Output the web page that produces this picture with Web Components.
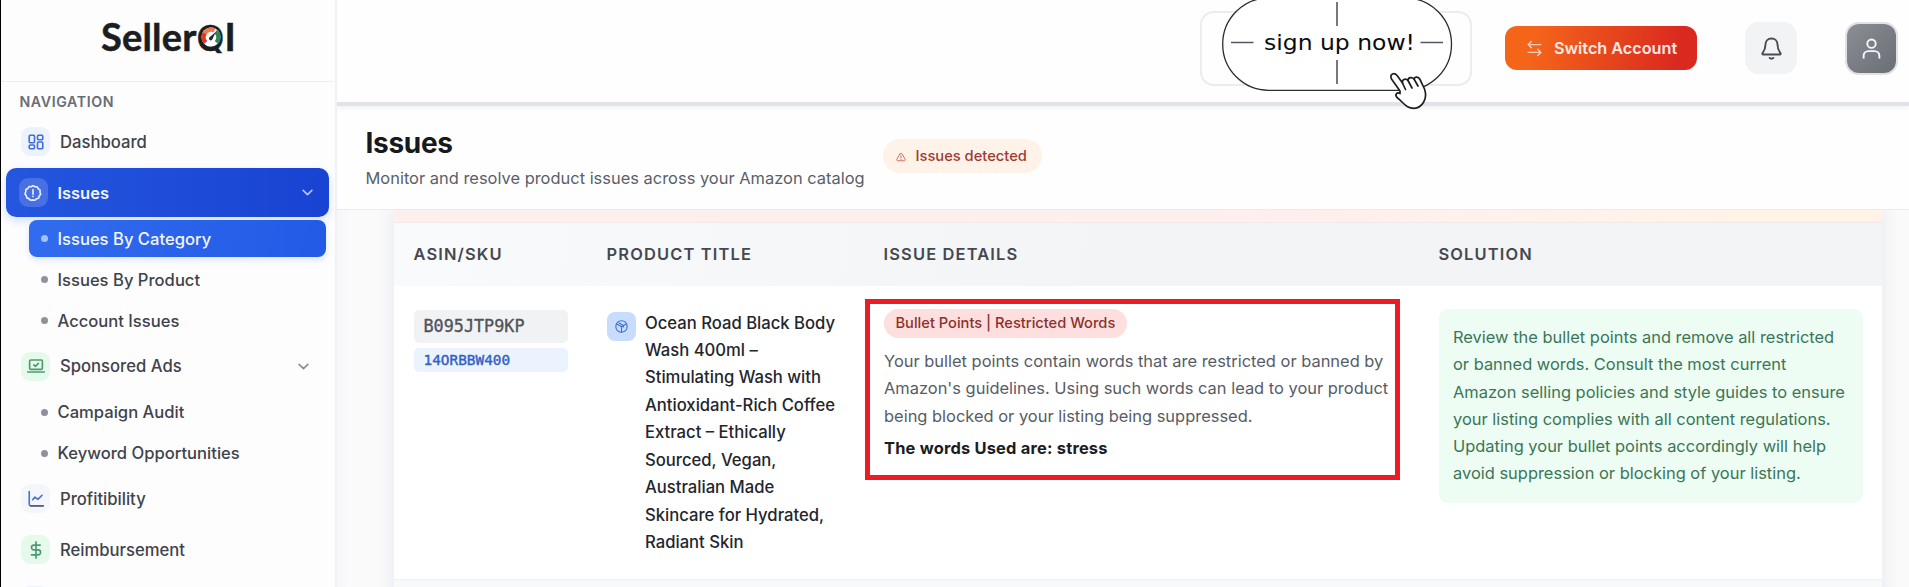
<!DOCTYPE html>
<html lang="en">
<head>
<meta charset="utf-8">
<title>SellerQI - Issues</title>
<style>
	html, body {
		margin: 0;
		height: 100%;
		overflow: hidden;
	}

	body {
		font-family: Inter, "Liberation Sans", sans-serif;
		font-size: 16.450px;
		color: #3f434b;
		background: #fdfdfd;
	}
</style>
</head>
<body>
<seller-app>
	<app-sidebar slot="sidebar">
		<nav-item icon="dashboard" tone="blue">Dashboard</nav-item>
		<nav-item icon="alert" active expandable>Issues</nav-item>
		<nav-group>
			<nav-sub active>Issues By Category</nav-sub>
			<nav-sub>Issues By Product</nav-sub>
			<nav-sub>Account Issues</nav-sub>
		</nav-group>
		<nav-item icon="laptop" tone="green" expandable>Sponsored Ads</nav-item>
		<nav-group>
			<nav-sub>Campaign Audit</nav-sub>
			<nav-sub>Keyword Opportunities</nav-sub>
		</nav-group>
		<nav-item icon="chart" tone="gray">Profitibility</nav-item>
		<nav-item icon="dollar" tone="green">Reimbursement</nav-item>
		<nav-item icon="none" tone="blue"></nav-item>
	</app-sidebar>
	<top-bar slot="top"></top-bar>
	<page-header slot="header" heading="Issues" badge="Issues detected">Monitor and resolve product issues across your Amazon catalog</page-header>
	<issue-table>
		<issue-row asin="B095JTP9KP" sku="14ORBBW400" tag="Bullet Points | Restricted Words">
			<span slot="title">Ocean Road Black Body<br>Wash 400ml –<br>Stimulating Wash with<br>Antioxidant-Rich Coffee<br>Extract – Ethically<br>Sourced, Vegan,<br>Australian Made<br>Skincare for Hydrated,<br>Radiant Skin</span>
			<span slot="details">Your bullet points contain words that are restricted or banned by<br>Amazon's guidelines. Using such words can lead to your product<br>being blocked or your listing being suppressed.</span>
			<span slot="words">The words Used are: stress</span>
			<span slot="solution">Review the bullet points and remove all restricted<br>or banned words. Consult the most current<br>Amazon selling policies and style guides to ensure<br>your listing complies with all content regulations.<br>Updating your bullet points accordingly will help<br>avoid suppression or blocking of your listing.</span>
		</issue-row>
	</issue-table>
</seller-app>

<script>
const ICONS = {
	none: '',
	dashboard: '<rect x="3" y="3" width="7" height="10" rx="1.2"/><rect x="14" y="3" width="7" height="6" rx="1.2"/><rect x="14" y="12" width="7" height="9" rx="1.2"/><rect x="3" y="16" width="7" height="5" rx="1.2"/>',
	alert: '<path d="M12 2.2l2.6 1.5 3 .1 1.4 2.6 2.5 1.7-.2 3 .9 2.7-2 2.2-.8 2.9-2.9.8-2.2 2-2.8-.6-2.9.5-2.1-2.1-2.8-1-.6-2.9-1.8-2.4 1.1-2.8.1-3 2.6-1.5L6.700 3.500l3 .1z"/><path d="M12 7.500v6M12 16.400v.4"/>',
	laptop: '<rect x="3.500" y="4" width="17" height="12.500" rx="1.500"/><path d="M1 20h22M9 10.500l2.200 2 4-4"/>',
	chart: '<path d="M3 2v17a2 2 0 0 0 2 2h16.500"/><path stroke="#596273" d="M5 21.200h16.500"/><path d="M7.500 13l3-3.500 4 3 5.500-5.500"/>',
	dollar: '<path d="M12 1v22M17.500 5.500H9.200a3.200 3.200 0 0 0 0 6.400h5.600a3.300 3.300 0 0 1 0 6.600H6"/>',
	chevron: '<path d="M5 8.500l7 7 7-7"/>',
	swap: '<path d="M7.500 2L3 6.500 7.500 11M3 6.500h18M16.500 13l4.500 4.500-4.500 4.500M21 17.500H3"/>',
	bell: '<path d="M12 1.500c-4 0-6.300 3-6.300 6.700 0 4.500-1.200 6.400-3 8.600-.5.700-.2 1.500.7 1.500h17.200c.9 0 1.200-.8.700-1.500-1.800-2.200-3-4.100-3-8.600 0-3.700-2.300-6.700-6.300-6.700z"/><path d="M10 21.800c1 1.100 3 1.100 4 0"/>',
	user: '<circle cx="12" cy="6.500" r="4.800"/><path d="M3 22.500v-2a5.500 5.500 0 0 1 5.500-5.500h7a5.500 5.500 0 0 1 5.500 5.500v2"/>',
	warning: '<path d="M9.600 4.500L2 17.500c-1 1.800.2 3.500 2.200 3.500h15.600c2 0 3.200-1.700 2.200-3.500l-7.600-13c-1-1.800-3.800-1.800-4.800 0zM12 9v5M12 17v1"/>',
	box: '<path d="M12 1.500c6 0 10.500 4.500 10.500 10.500S18 22.500 12 22.500 1.500 18 1.500 12 6 1.500 12 1.500z"/><path d="M4 8l8 4.500L20 8M12 12.500v9M7.500 5.500l8 4.500v3"/>'
}

class UiIcon extends HTMLElement {
	connectedCallback() {
		this.attachShadow({ mode: 'open' })
		this.shadowRoot.innerHTML = `
			<style>
				:host { display: inline-flex; flex: none; width: 18px; height: 18px; }
				svg { width: 100%; height: 100%; overflow: visible; }
			</style>
			<svg viewBox="0 0 24 24" fill="none" stroke="currentColor" stroke-width="${this.getAttribute('stroke') || 2}"
				stroke-linecap="round" stroke-linejoin="round">${ICONS[this.getAttribute('name')]}</svg>
		`
	}
}

class SellerApp extends HTMLElement {
	constructor() {
		super()
		this.attachShadow({ mode: 'open' })
		this.shadowRoot.innerHTML = `
			<style>
				:host {
					display: grid;
					grid-template-columns: 337px minmax(0, 1fr);
					height: 587px;
					overflow: hidden;
				}
				main {
					display: flex;
					flex-direction: column;
					min-width: 0;
					overflow: hidden;
				}
			</style>
			<slot name="sidebar"></slot>
			<main>
				<slot name="top"></slot>
				<slot name="header"></slot>
				<slot></slot>
			</main>
		`
	}
}

class AppSidebar extends HTMLElement {
	constructor() {
		super()
		this.attachShadow({ mode: 'open' })
		this.shadowRoot.innerHTML = `
			<style>
				:host {
					display: block;
					box-sizing: border-box;
					height: 587px;
					overflow: hidden;
					padding-right: 1px;
					border-left: 1px solid #000;
					border-right: 2px solid #f0f1f4;
				}
				.brand {
					display: flex;
					justify-content: center;
					align-items: center;
					box-sizing: border-box;
					height: 82px;
					padding: 0 0 8px 2px;
					border-bottom: 1px solid #eeeff1;
				}
				.logo {
					font: 700 38px/44px Lato, sans-serif;
					letter-spacing: .2px;
					color: #1c1d20;
					-webkit-text-stroke: .5px #1c1d20;
				}
				.q {
					position: relative;
					font: 600 36px/44px Inter, sans-serif;
				}
				.q svg {
					position: absolute;
					left: 4px;
					top: 11.500px;
					width: 20px;
					height: 20px;
				}
				.title {
					padding: 10.500px 0 0 18.500px;
					height: 24.500px;
					font-size: 14.200px;
					line-height: 18px;
					font-weight: 600;
					letter-spacing: .6px;
					color: #686c75;
				}
			</style>
			<div class="brand">
				<div class="logo">Seller<span class="q">Q<svg viewBox="0 0 20 20">
					<circle cx="10" cy="10" r="9.600" fill="#fff"/>
					<g fill="none" stroke-width="4.500">
						<path d="M4.600 15.500A7.400 7.400 0 0 1 4 6" stroke="#d9382b"/>
						<path d="M3.600 6.300A7.400 7.400 0 0 1 13.500 3.500" stroke="#ee7955"/>
						<path d="M14.800 4.500A7.400 7.400 0 0 1 15.400 15.500" stroke="#2f8458"/>
					</g>
					<path d="M14.800 5L11.500 12a1.800 1.800 0 1 1-2.700-1.900z" fill="#26282b"/>
				</svg></span>I</div>
			</div>
			<div class="title">NAVIGATION</div>
			<slot></slot>
		`
	}
}

class NavGroup extends HTMLElement {
	constructor() {
		super()
		this.attachShadow({ mode: 'open' })
		this.shadowRoot.innerHTML = `
			<style>
				:host {
					display: flex;
					flex-direction: column;
					gap: 4px;
					padding: 1px 8px 2.500px 27.500px;
				}
			</style>
			<slot></slot>
		`
	}
}

class NavItem extends HTMLElement {
	constructor() {
		super()
		this.attachShadow({ mode: 'open' })
		const chevron = this.hasAttribute('expandable') ? '<ui-icon class="chevron" name="chevron" stroke="2.600"></ui-icon>' : ''
		this.shadowRoot.innerHTML = `
			<style>
				:host {
					display: flex;
					align-items: center;
					box-sizing: border-box;
					height: 49px;
					margin: 0 5px 2px;
					padding: 0 17px 0 15px;
					gap: 10px;
					border-radius: 10px;
					font-weight: 500;
					font-size: 16.650px;
				}
				.icon {
					display: flex;
					flex: none;
					align-items: center;
					justify-content: center;
					width: 29px;
					height: 29px;
					border-radius: 9px;
				}
				.label { flex: 1; }
				.chevron { width: 15px; height: 15px; color: #888c95; margin-right: 1px; }
				:host([tone="blue"]) .icon { background: #edf3fe; color: #406fdb; }
				:host([tone="green"]) .icon { background: #e6faec; color: #4d9970; }
				:host([tone="gray"]) .icon { background: #f5f6fa; color: #4874d6; }
				:host([active]) {
					padding: 0 14.500px 0 12.500px;
					color: #f2f5ff;
					font-weight: 600;
					font-size: 16.450px;
					background: linear-gradient(90deg, #2456df, #1943d2);
					box-shadow: 0 4px 10px #d3e1fb;
				}
				:host([active]) .icon { background: #4670e3; color: #e8eeff; }
				:host([active]) .chevron { color: #b3c5f7; margin-right: 0; }
			</style>
			<span class="icon"><ui-icon name="${this.getAttribute('icon')}" stroke="2.200"></ui-icon></span>
			<span class="label"><slot></slot></span>
			${chevron}
		`
	}
}

class NavSub extends HTMLElement {
	constructor() {
		super()
		this.attachShadow({ mode: 'open' })
		this.shadowRoot.innerHTML = `
			<style>
				:host {
					display: flex;
					align-items: center;
					gap: 10px;
					height: 37px;
					padding-left: 12px;
					border-radius: 8px;
					font-weight: 500;
					font-size: 16.600px;
				}
				i {
					width: 7px;
					height: 7px;
					border-radius: 50%;
					background: #8f929a;
				}
				:host([active]) {
					color: #f2f6ff;
					background: linear-gradient(100deg, #326cee, #225ae6);
					box-shadow: 0 3px 6px #dae5fb;
				}
				:host([active]) i { background: #a4c1fb; }
			</style>
			<i></i><slot></slot>
		`
	}
}

class TopBar extends HTMLElement {
	constructor() {
		super()
		this.attachShadow({ mode: 'open' })
		this.shadowRoot.innerHTML = `
			<style>
				:host {
					display: flex;
					flex: none;
					justify-content: flex-end;
					align-items: center;
					box-sizing: border-box;
					height: 106px;
					padding: 0 13px 6px 0;
					border-bottom: 4px solid #e2e3e7;
					box-shadow: 0 2px 5px #eff0f2;
					background: #fefefe;
					position: relative;
					z-index: 1;
				}
				.search {
					position: relative;
					box-sizing: border-box;
					width: 272px;
					height: 75px;
					margin-right: 33px;
					border: 2px solid #ececef;
					border-radius: 14px;
				}
				.sticker {
					position: absolute;
					left: 20px;
					top: -16.500px;
					width: 232px;
					height: 115px;
					overflow: visible;
				}
				.sticker text { font: 21px "DejaVu Sans", sans-serif; fill: #0c0c0e; }
				.switch {
					display: flex;
					align-items: center;
					box-sizing: border-box;
					width: 192px;
					height: 44px;
					padding-left: 21px;
					gap: 11px;
					margin-right: 48px;
					border-radius: 12px;
					background: linear-gradient(100deg, #f4651a 15%, #da291f 90%);
					color: #ffe9e2;
					font-weight: 600;
					font-size: 16.200px;
					white-space: nowrap;
				}
				.switch ui-icon { width: 17px; height: 17px; color: #ffcdb9; }
				.square {
					display: flex;
					align-items: center;
					justify-content: center;
					width: 52px;
					height: 52px;
					border-radius: 14px;
				}
				.bell { margin-right: 50px; background: #f2f3f5; color: #484c54; }
				.bell ui-icon { width: 23px; height: 23px; }
				.user {
					width: 49px;
					height: 49px;
					border-radius: 12px;
					background: linear-gradient(135deg, #8b8e94, #6a6e75);
					box-shadow: 0 0 0 2px #dfe1e4;
					color: #f5f6f8;
				}
				.user ui-icon { width: 21px; height: 21px; }
			</style>
			<div class="search">
				<svg class="sticker" viewBox="1221 -4 232 115">
					<rect x="1221.700" y="-2" width="228.800" height="92.300" rx="46.100" fill="#fff" stroke="#2b2c30" stroke-width="1.300"/>
					<path d="M1336 2v24M1336 60v24M1230 42.500h22.500M1419.500 42.500h22.500" stroke="#55585f" stroke-width="1.600"/>
					<text x="1263" y="50" textLength="151" lengthAdjust="spacingAndGlyphs">sign up now!</text>
					<g fill="#fff" stroke="#1d1e21" stroke-width="1.700" stroke-linecap="round" stroke-linejoin="round">
						<path d="M1399 91L1390.500 79C1388 74 1393.500 71.500 1396.500 76L1401.500 83C1400.500 79.500 1404.500 78 1407 80.500C1407 77.500 1411 76.500 1413 79C1414 76.500 1417.500 76.500 1419 79.500L1423.500 89C1427 99 1421 108 1413 108.300C1405 108.300 1402.500 102.500 1396 97.500C1393.500 94.500 1396 92 1399 93.500z"/>
						<path d="M1401.500 83l3 6.500M1407 80.500l4 7.500M1413 79l4 7" fill="none"/>
					</g>
				</svg>
			</div>
			<div class="switch"><ui-icon name="swap"></ui-icon>Switch Account</div>
			<div class="square bell"><ui-icon name="bell"></ui-icon></div>
			<div class="square user"><ui-icon name="user" stroke="2.200"></ui-icon></div>
		`
	}
}

class PageHeader extends HTMLElement {
	constructor() {
		super()
		this.attachShadow({ mode: 'open' })
		this.shadowRoot.innerHTML = `
			<style>
				:host {
					display: flex;
					flex: none;
					align-items: center;
					box-sizing: border-box;
					height: 104px;
					padding-left: 28.500px;
					gap: 19px;
					border-bottom: 1px solid #ebecef;
					background: #fefefe;
					white-space: nowrap;
				}
				.texts { width: 498px; }
				h1 {
					margin: 1px 0 0;
					font-size: 28px;
					line-height: 36px;
					font-weight: 700;
					letter-spacing: -.3px;
					color: #17191e;
				}
				p { margin: 4px 0 0; line-height: 26px; color: #5a5f69; }
				.badge {
					display: flex;
					align-items: center;
					box-sizing: border-box;
					height: 34px;
					padding: 0 15.500px 0 13.500px;
					margin-top: -4px;
					gap: 9.500px;
					border-radius: 17px;
					background: #fff2e8;
					color: #9c3a33;
					font-size: 14.700px;
					font-weight: 500;
				}
				ui-icon { width: 10px; height: 10px; margin-top: 2px; color: #bf5751; }
			</style>
			<div class="texts">
				<h1>${this.getAttribute('heading')}</h1>
				<p><slot></slot></p>
			</div>
			<span class="badge"><ui-icon name="warning" stroke="2"></ui-icon>${this.getAttribute('badge')}</span>
		`
	}
}

class IssueTable extends HTMLElement {
	constructor() {
		super()
		this.attachShadow({ mode: 'open' })
		this.shadowRoot.innerHTML = `
			<style>
				:host {
					display: block;
					flex: 1;
					min-height: 0;
					overflow: hidden;
					padding: 0 27px 0 57px;
					background: linear-gradient(90deg, #f5f6f8, #fafafb 12px);
				}
				.card {
					height: 400px;
					background: #fff;
					box-shadow: 0 0 16px 2px #e8eaee;
				}
				.strip {
					box-sizing: border-box;
					height: 13px;
					border-bottom: 1.500px solid #f5e6e7;
					background: linear-gradient(90deg, #feeeef 55%, #fff3e8 90%);
				}
				.head {
					display: grid;
					grid-template-columns: 193px 277px 555px 1fr;
					align-items: center;
					box-sizing: border-box;
					height: 63px;
					padding: 0 20px 2px 19.500px;
					background: linear-gradient(100deg, #f9fafb, #f2f4f6 50%);
					font-size: 16.450px;
					font-weight: 600;
					letter-spacing: 1.150px;
					color: #45484f;
				}
			</style>
			<div class="card">
				<div class="strip"></div>
				<div class="head">
					<span>ASIN/SKU</span>
					<span>PRODUCT TITLE</span>
					<span>ISSUE DETAILS</span>
					<span>SOLUTION</span>
				</div>
				<slot></slot>
			</div>
		`
	}
}

class IssueRow extends HTMLElement {
	constructor() {
		super()
		this.attachShadow({ mode: 'open' })
		this.shadowRoot.innerHTML = `
			<style>
				:host {
					display: grid;
					grid-template-columns: 193px 258px 574px 424px;
					align-items: start;
					box-sizing: border-box;
					height: 294px;
					padding: 13px 0 0 20px;
					border-bottom: 1px solid #eff0f2;
					box-shadow: 0 20px #f8f9fb;
					white-space: nowrap;
					line-height: 27.300px;
				}
				.ids {
					display: flex;
					flex-direction: column;
					gap: 5px;
					width: 154px;
					padding-top: 11px;
					font-family: "DejaVu Sans Mono", monospace;
				}
				.asin, .sku { padding-left: 9.500px; border-radius: 5px; }
				.asin {
					font-size: 16.800px;
					line-height: 33px;
					background: #f1f2f4;
					color: #50535a;
					-webkit-text-stroke: .35px #50535a;
				}
				.sku {
					font-size: 14.400px;
					line-height: 24px;
					background: #ebf3fe;
					color: #365fc6;
					-webkit-text-stroke: .4px #365fc6;
				}
				.product {
					display: flex;
					gap: 9px;
					padding-top: 10.500px;
					font-size: 16.650px;
					line-height: 27.450px;
					font-weight: 500;
					color: #23262c;
				}
				.thumb {
					display: flex;
					flex: none;
					align-items: center;
					justify-content: center;
					width: 29px;
					height: 29px;
					margin-top: 2.500px;
					border-radius: 8px;
					background: #c8dcfe;
					color: #3d6cd9;
				}
				.thumb ui-icon { width: 13px; height: 13px; }
				.details {
					box-sizing: border-box;
					width: 535px;
					height: 181px;
					padding: 5px 0 0 14px;
					border: 5px solid #ed1c24;
					color: #575c66;
				}
				.tag {
					display: block;
					width: max-content;
					padding: 0 11.500px;
					border-radius: 15px;
					background: #fddfdf;
					color: #8c302b;
					font-size: 14.650px;
					line-height: 29px;
					font-weight: 500;
				}
				.text { padding-top: 10px; }
				.words { padding-top: 5px; font-weight: 700; color: #1b1d22; letter-spacing: .2px; }
				.solution {
					box-sizing: border-box;
					height: 194px;
					margin-top: 10px;
					padding: 15px 14px;
					border-radius: 9px;
					background: #edfdf3;
					color: #3c7557;
				}
			</style>
			<div class="ids">
				<span class="asin">${this.getAttribute('asin')}</span>
				<span class="sku">${this.getAttribute('sku')}</span>
			</div>
			<div class="product">
				<span class="thumb"><ui-icon name="box"></ui-icon></span>
				<slot name="title"></slot>
			</div>
			<div class="details">
				<span class="tag">${this.getAttribute('tag')}</span>
				<div class="text"><slot name="details"></slot></div>
				<div class="words"><slot name="words"></slot></div>
			</div>
			<div class="solution"><slot name="solution"></slot></div>
		`
	}
}

customElements.define('ui-icon', UiIcon)
customElements.define('seller-app', SellerApp)
customElements.define('app-sidebar', AppSidebar)
customElements.define('nav-group', NavGroup)
customElements.define('nav-item', NavItem)
customElements.define('nav-sub', NavSub)
customElements.define('top-bar', TopBar)
customElements.define('page-header', PageHeader)
customElements.define('issue-table', IssueTable)
customElements.define('issue-row', IssueRow)
</script>
</body>
</html>
